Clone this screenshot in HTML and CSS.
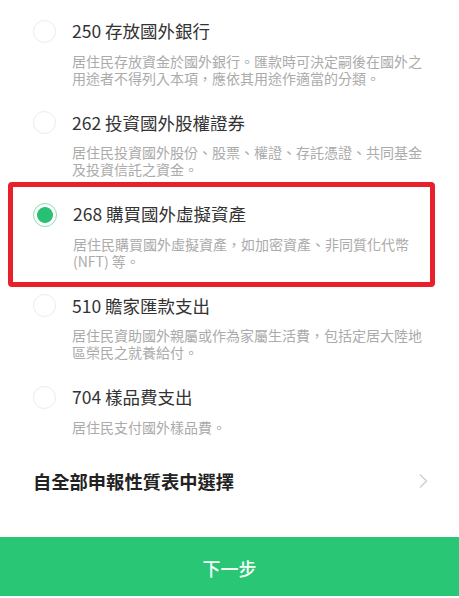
FILE: index.html
```html
<!DOCTYPE html>
<html lang="zh-Hant">
<head>
    <meta charset="UTF-8">
    <meta name="viewport" content="width=device-width, initial-scale=1.0">
    <title>申報性質</title>
    <link rel="stylesheet" href="styles.css">
</head>
<body>
    <div class="list">
        <div class="item">
            <span class="radio"></span>
            <div class="text">
                <div class="title">250 存放國外銀行</div>
                <p class="desc">居住民存放資金於國外銀行。匯款時可決定嗣後在國外之用途者不得列入本項，應依其用途作適當的分類。</p>
            </div>
        </div>

        <div class="item">
            <span class="radio"></span>
            <div class="text">
                <div class="title">262 投資國外股權證券</div>
                <p class="desc">居住民投資國外股份、股票、權證、存託憑證、共同基金及投資信託之資金。</p>
            </div>
        </div>

        <!-- 選取的項目，外框為標示 -->
        <div class="item selected">
            <span class="radio checked"></span>
            <div class="text">
                <div class="title">268 購買國外虛擬資產</div>
                <p class="desc">居住民購買國外虛擬資產，如加密資產、非同質化代幣(NFT) 等。</p>
            </div>
        </div>

        <div class="item">
            <span class="radio"></span>
            <div class="text">
                <div class="title">510 贍家匯款支出</div>
                <p class="desc">居住民資助國外親屬或作為家屬生活費，包括定居大陸地區榮民之就養給付。</p>
            </div>
        </div>

        <div class="item">
            <span class="radio"></span>
            <div class="text">
                <div class="title">704 樣品費支出</div>
                <p class="desc">居住民支付國外樣品費。</p>
            </div>
        </div>
    </div>

    <div class="pick-row">
        <span class="pick-label">自全部申報性質表中選擇</span>
        <svg class="chevron" width="10" height="16" viewBox="0 0 10 16">
            <path d="M2 1.5 L8.5 8 L2 14.5" fill="none" stroke="#cfcfcf" stroke-width="1.4"/>
        </svg>
    </div>

    <button class="next-btn">下一步</button>
</body>
</html>
```

FILE: styles.css
```css
body {
    margin: 0;
    padding: 0;
    background-color: #ffffff;
    font-family: "Noto Sans CJK TC", "Noto Sans", sans-serif;
    overflow: hidden;
}

.list {
    padding-top: 7px;
}

.item {
    position: relative;
    display: flex;
    align-items: flex-start;
    padding: 12px 29px 12px 33px;
}

.radio {
    flex: 0 0 auto;
    width: 23px;
    height: 23px;
    margin-top: 0.5px;
    margin-right: 16px;
    border: 1.5px solid #ececec;
    border-radius: 50%;
    box-sizing: border-box;
}

.radio.checked {
    width: 24px;
    height: 24px;
    border: 1.5px solid #8ddcb2;
    background: radial-gradient(circle, #28c173 0, #28c173 7.5px, #ffffff 8.3px);
}

.title {
    font-size: 17.5px;
    line-height: 24px;
    color: #333333;
}

.desc {
    width: 351px;
    margin: 9.5px 0 0;
    font-size: 14px;
    line-height: 17px;
    color: #ababab;
}

/* Marco rojo de marcación sobre el item elegido */
.item.selected::after {
    content: "";
    position: absolute;
    top: -8px;
    bottom: -5px;
    left: 8px;
    right: 24px;
    border: 5px solid #e8202a;
    border-radius: 4px;
}

.pick-row {
    display: flex;
    align-items: center;
    justify-content: space-between;
    height: 66px;
    padding: 0 31px 0 33px;
}

.pick-label {
    font-size: 18.3px;
    font-weight: bold;
    color: #222222;
}

.chevron {
    display: block;
}

.next-btn {
    display: block;
    width: 100%;
    height: 59px;
    margin-top: 23px;
    padding: 4px 0 0;
    border: none;
    background-color: #28c675;
    color: #f4fff8;
    font-family: "Noto Sans CJK TC", "Noto Sans", sans-serif;
    font-size: 18px;
    font-weight: 500;
}
```
